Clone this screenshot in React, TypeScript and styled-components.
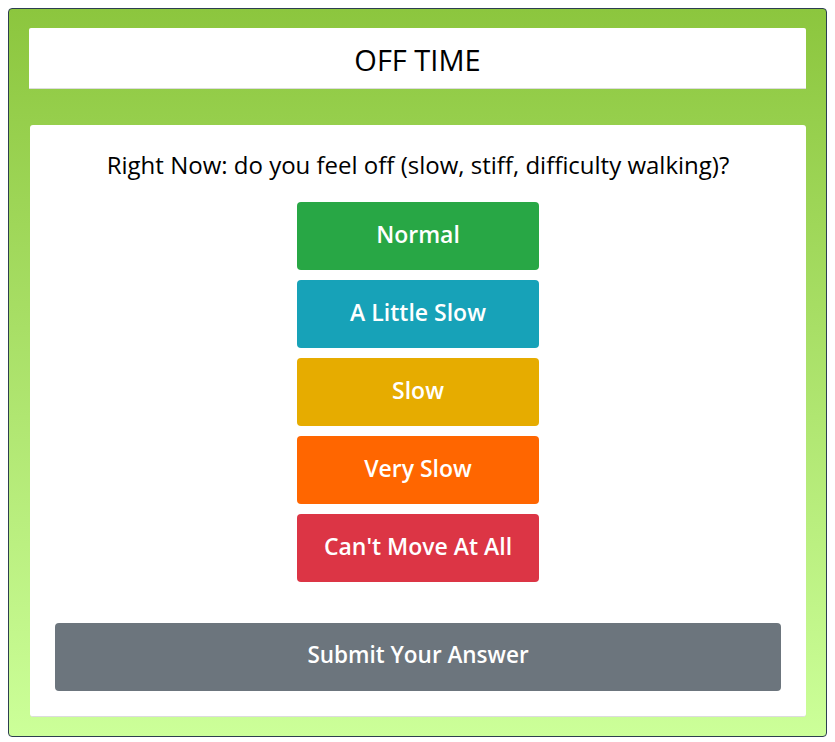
import styled, { createGlobalStyle } from 'styled-components';

const GlobalStyle = createGlobalStyle`
  body {
    margin: 8px;
    font-family: 'Open Sans', 'Noto Sans', sans-serif;
  }
  * {
    box-sizing: border-box;
  }
`;

const Frame = styled.div`
  width: 819px;
  height: 729px;
  border: 1px solid #2c3e50;
  border-radius: 4px;
  background: linear-gradient(to bottom, #8cc63e, #ccff99);
  padding: 19px 20px 20px 20px;
  display: flex;
  flex-direction: column;
  gap: 36px;
`;

const Header = styled.div`
  flex-shrink: 0;
  height: 61px;
  padding-top: 3px;
  background: #ffffff;
  border-bottom: 1px solid #dcdcdc;
  border-radius: 2px 2px 0 0;
  display: flex;
  align-items: center;
  justify-content: center;
`;

const Title = styled.h1`
  margin: 0;
  font-size: 29px;
  line-height: 34px;
  font-weight: 500;
  color: #000;
`;

const Card = styled.div`
  flex: 1;
  margin-left: 1px;
  background: #ffffff;
  border-radius: 3px;
  border-bottom: 1px solid #dcdcdc;
  padding: 25px 25px 25px 25px;
  display: flex;
  flex-direction: column;
  align-items: center;
`;

const Question = styled.p`
  margin: 0 0 22px 0;
  font-size: 24px;
  line-height: 30px;
  color: #000;
`;

const Choices = styled.div`
  display: flex;
  flex-direction: column;
  gap: 10px;
  margin-bottom: 41px;
`;

const ChoiceButton = styled.button<{ $bg: string }>`
  width: 242px;
  height: 68px;
  padding: 0 0 5px 0;
  border: none;
  border-radius: 4px;
  background: ${(p) => p.$bg};
  color: #ffffff;
  font-family: inherit;
  font-size: 23px;
  font-weight: 600;
  cursor: pointer;
`;

const SubmitButton = styled.button`
  width: 100%;
  height: 68px;
  flex-shrink: 0;
  padding: 0 0 5px 0;
  border: none;
  border-radius: 4px;
  background: #6c757d;
  color: #ffffff;
  font-family: inherit;
  font-size: 22.5px;
  font-weight: 600;
  cursor: pointer;
`;

const choices = [
  { label: 'Normal', color: '#28a745' },
  { label: 'A Little Slow', color: '#17a2b8' },
  { label: 'Slow', color: '#e6ac00' },
  { label: 'Very Slow', color: '#ff6600' },
  { label: "Can't Move At All", color: '#dc3545' },
];

export default function App() {
  return (
    <>
      <GlobalStyle />
      <Frame>
        <Header>
          <Title>OFF TIME</Title>
        </Header>
        <Card>
          <Question>Right Now: do you feel off (slow, stiff, difficulty walking)?</Question>
          <Choices>
            {choices.map((c) => (
              <ChoiceButton key={c.label} $bg={c.color}>
                {c.label}
              </ChoiceButton>
            ))}
          </Choices>
          <SubmitButton>Submit Your Answer</SubmitButton>
        </Card>
      </Frame>
    </>
  );
}
